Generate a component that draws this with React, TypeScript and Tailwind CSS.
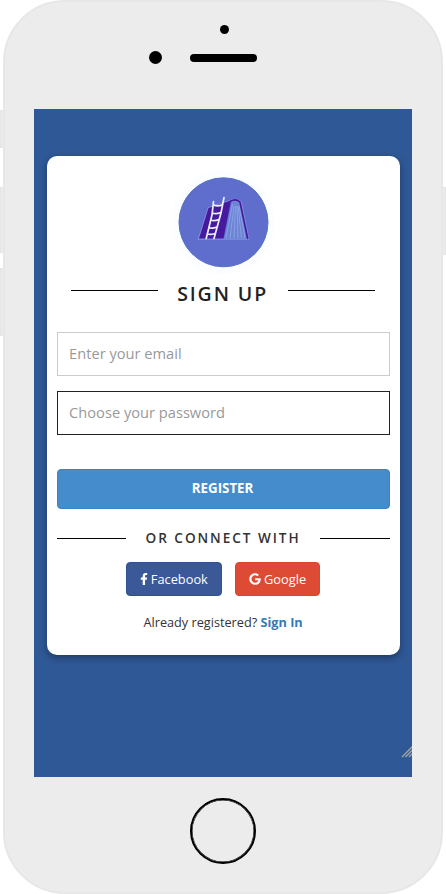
import { FaFacebookF, FaGoogle } from "react-icons/fa";

function BookLogo() {
  return (
    <svg width="106" height="106" viewBox="0 0 106 106" className="block">
      <circle cx="53" cy="52.5" r="52" fill="#fcfdff" />
      <circle cx="53.5" cy="52.3" r="44.5" fill="#5f6ecd" stroke="#5370c6" strokeWidth="1" />
      <path d="M38.5 38 L61 30.5 Q66 28 71 31.5 L78.5 69 L28.5 69 Z" fill="none" stroke="#8391df" strokeWidth="1.4" />
      <path d="M38.5 38 L61 30.5 L53.5 68.5 L29 68.5 Z" fill="#46199f" />
      <path d="M61.5 31.5 Q66 29.5 70 32 L76.5 68.5 L54 68.5 Z" fill="#6d83d6" />
      <path d="M60 31.4 Q66 28 70 32 L77.8 69" fill="none" stroke="#46199f" strokeWidth="1.6" />
      <path d="M62.5 34 L56 68 M64 36 L60 68 M65.5 36 L64 68 M67 36 L68 68 M68 36 L71.5 68 M69 36 L75 68" stroke="#88a2e2" strokeWidth="1" />
      <path
        d="M43.5 31.5 L42 45 L36.2 68.5 M54 27.5 L51 43 L44 68.5"
        fill="none"
        stroke="#e9efff"
        strokeWidth="1.7"
        strokeLinecap="round"
      />
      <path
        d="M43.5 35 Q48 37 52.5 34.5 M42 43 Q46 44.5 51 42.5 M40.5 50 Q44 51.5 49 49.5 M38.5 57.5 Q42 59 47 57 M37 64 Q41 65 45 63.5"
        fill="none"
        stroke="#e9efff"
        strokeWidth="1.7"
      />
    </svg>
  );
}

function Sensors() {
  return (
    <div className="flex h-[107px] flex-col items-center">
      <div className="mt-[22.5px] ml-[3px] size-[9px] rounded-full bg-black" />
      <div className="mt-[17px] flex w-full items-center">
        <div className="ml-[143.5px] size-[13px] rounded-full bg-black" />
        <div className="mt-[2px] ml-[28px] h-[7.5px] w-[67.5px] rounded-full bg-black" />
      </div>
    </div>
  );
}

function SignUpCard() {
  return (
    <main className="h-[499.5px] w-[353px] rounded-[10px] bg-white px-[10px] text-[#333] shadow-[0_3px_7px_rgba(0,0,0,0.35)]">
      <div className="flex justify-center pt-[14px] pr-px">
        <BookLogo />
      </div>
      <div className="flex h-[36px] items-center justify-between px-[14px] pr-[15px] text-[#222]">
        <span className="mb-[7px] h-px w-[87px] bg-black" />
        <h1 className="text-[19.5px] leading-none font-semibold tracking-[1.9px]">SIGN UP</h1>
        <span className="mb-[7px] h-px w-[87px] bg-black" />
      </div>
      <input
        type="email"
        placeholder="Enter your email"
        className="mt-[20px] block h-[44px] w-full border border-[#ccc] bg-white px-[11.5px] pb-[1px] text-[14.65px] outline-none placeholder:text-[#999]"
      />
      <input
        type="password"
        placeholder="Choose your password"
        className="mt-[15px] block h-[44px] w-full border border-[#222] bg-white px-[11.5px] pb-[1px] text-[14.65px] outline-none placeholder:text-[#999]"
      />
      <button className="mt-[34px] block h-[40px] w-full rounded-[4px] border border-[#3a84c4] bg-[#448ccb] pr-px text-[13.3px] font-bold text-white">
        REGISTER
      </button>
      <div className="mt-[19.5px] flex h-[20px] items-center justify-between">
        <span className="h-px w-[69.5px] bg-black" />
        <h2 className="text-[13.6px] leading-none font-semibold tracking-[1.95px]">OR CONNECT WITH</h2>
        <span className="h-px w-[69.5px] bg-black" />
      </div>
      <div className="mt-[13.5px] flex justify-center gap-[13px]">
        <button className="flex h-[34px] w-[96px] items-center justify-center gap-[3px] rounded-[4px] border border-[#30508f] bg-[#3b5998] pt-px text-[12.8px] text-white">
          <FaFacebookF className="-mr-[2px] -ml-[2px] size-[12px]" />
          Facebook
        </button>
        <button className="flex h-[34px] w-[85.5px] items-center justify-center gap-[3px] rounded-[4px] border border-[#dc442d] bg-[#dd4b35] pt-px text-[12.8px] text-white">
          <FaGoogle className="size-[12px]" />
          Google
        </button>
      </div>
      <p className="mt-[16px] text-center text-[12.7px] leading-[20px]">
        Already registered? <a className="font-bold text-[#337ab7]">Sign In</a>
      </p>
    </main>
  );
}

export default function App() {
  return (
    <div className="flex h-[894px] w-[446px] overflow-hidden bg-white font-['Open_Sans',sans-serif]">
      <div className="w-[3px] shrink-0 pt-[110px]">
        <div className="h-[38px] border border-r-0 border-[#e5e5e5] bg-[#ebebeb]" />
        <div className="mt-[39px] h-[66px] border border-r-0 border-[#e5e5e5] bg-[#ebebeb]" />
        <div className="mt-[15px] h-[68px] border border-r-0 border-[#e5e5e5] bg-[#ebebeb]" />
      </div>
      <div className="flex w-[440px] shrink-0 flex-col rounded-[62px] border-2 border-[#e7e7e7] bg-[#ececec]">
        <Sensors />
        <div className="ml-[29px] flex h-[668.4px] w-[378px] flex-col justify-between bg-[#2f5896] pt-[46.7px] pl-[12.6px]">
          <SignUpCard />
          <svg width="11" height="12" className="mb-[19px] self-end" viewBox="0 0 11 12">
            <path d="M1 11 L12 0 M4.5 11 L12 3.5 M8 11 L12 7" stroke="#a5a5a5" strokeWidth="1.3" />
          </svg>
        </div>
        <div className="mt-[20.6px] ml-[185px] size-[66px] rounded-full border-2 border-black shadow-[inset_0_0_0_0.5px_#000]" />
      </div>
      <div className="w-[3px] shrink-0 pt-[187px]">
        <div className="h-[68px] border border-l-0 border-[#e5e5e5] bg-[#ebebeb]" />
      </div>
    </div>
  );
}
